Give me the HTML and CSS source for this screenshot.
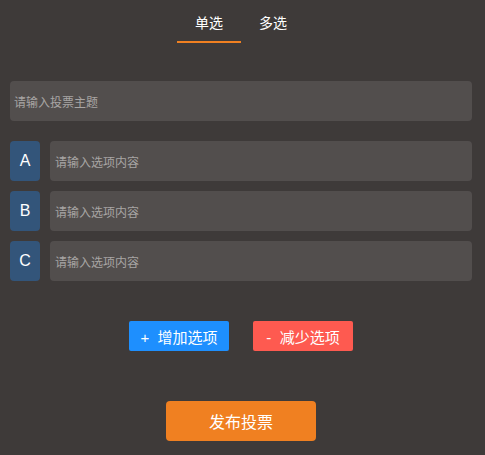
FILE: index.html
```html
<!DOCTYPE html>
<html lang="zh">
<head>
<meta charset="utf-8">
<link rel="stylesheet" href="styles.css">
</head>
<body>
<div class="page">
  <div class="tabs">
    <div class="tab active">单选</div>
    <div class="tab">多选</div>
  </div>
  <div class="field title-field"><span class="ph">请输入投票主题</span></div>
  <div class="options">
    <div class="option"><div class="label">A</div><div class="field"><span class="ph">请输入选项内容</span></div></div>
    <div class="option"><div class="label">B</div><div class="field"><span class="ph">请输入选项内容</span></div></div>
    <div class="option"><div class="label">C</div><div class="field"><span class="ph">请输入选项内容</span></div></div>
  </div>
  <div class="actions">
    <div class="btn add">+&nbsp;&nbsp;增加选项</div>
    <div class="btn remove">-&nbsp;&nbsp;减少选项</div>
  </div>
  <div class="submit-wrap">
    <div class="submit">发布投票</div>
  </div>
</div>
</body>
</html>
```
FILE: styles.css
```css
html, body {
  margin: 0;
  padding: 0;
  background: #3e3a39;
}
body {
  font-family: "Liberation Sans", "Noto Sans CJK SC", sans-serif;
  color: #fff;
}
.page {
  width: 462px;
  padding: 0 13px 0 10px;
}
.tabs {
  display: flex;
  justify-content: center;
  padding-top: 13px;
}
.tab {
  width: 64px;
  text-align: center;
  font-size: 14px;
  line-height: 20px;
  height: 28px;
  border-bottom: 2px solid transparent;
}
.tab.active {
  border-bottom-color: #f08021;
}
.field {
  flex: 1;
  height: 40px;
  background: #524e4d;
  border-radius: 4px;
  display: flex;
  align-items: center;
}
.ph {
  font-size: 12px;
  color: #a8a5a4;
}
.title-field {
  margin-top: 38px;
  padding-left: 4px;
}
.options {
  margin-top: 20px;
  display: flex;
  flex-direction: column;
  gap: 10px;
}
.option {
  display: flex;
  gap: 10px;
}
.option .field {
  padding-left: 5px;
}
.label {
  width: 30px;
  height: 40px;
  background: #33557a;
  border-radius: 4px;
  display: flex;
  align-items: center;
  justify-content: center;
  font-size: 16px;
}
.actions {
  margin-top: 40px;
  display: flex;
  justify-content: center;
  gap: 24px;
}
.btn {
  width: 100px;
  height: 30px;
  border-radius: 2px;
  display: flex;
  align-items: center;
  justify-content: center;
  font-size: 15px;
}
.btn.add { background: #1e8ffe; }
.btn.remove { background: #fe5a50; }
.submit-wrap {
  margin-top: 50px;
  display: flex;
  justify-content: center;
}
.submit {
  width: 150px;
  height: 40px;
  background: #f08021;
  border-radius: 4px;
  display: flex;
  align-items: center;
  justify-content: center;
  font-size: 16px;
}
```
